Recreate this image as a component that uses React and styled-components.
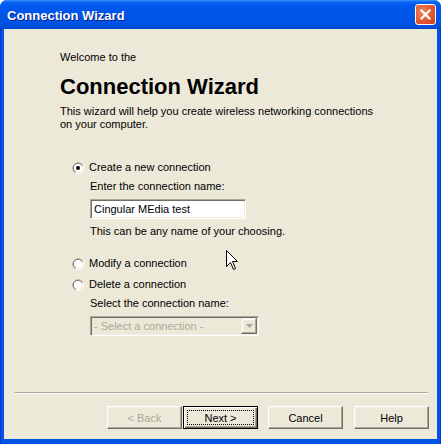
import React from "react";
import styled, { createGlobalStyle } from "styled-components";

const Global = createGlobalStyle`
  html, body { margin: 0; padding: 0; background: #ffffff; }
  body { font-family: "Liberation Sans", Arial, sans-serif; font-size: 11px; color: #000; }
  * { box-sizing: border-box; }
`;

const Window = styled.div`
  position: relative;
  width: 441px;
  height: 444px;
  display: flex;
  flex-direction: column;
  background: #0054e3;
  border-radius: 7px 7px 0 0;
  overflow: hidden;
`;

const TitleBar = styled.div`
  height: 29px;
  flex: none;
  display: flex;
  align-items: center;
  justify-content: space-between;
  padding: 0 5px 0 7px;
  background: linear-gradient(
    to bottom,
    #3d95ff 0px,
    #0a66f0 2px,
    #0058ee 5px,
    #0055e9 14px,
    #0054e3 22px,
    #004fdc 26px,
    #0046d0 29px
  );
`;

const Title = styled.span`
  color: #fff;
  font-family: "Liberation Sans", Arial, sans-serif;
  font-weight: bold;
  font-size: 13px;
  text-shadow: 1px 1px 0 #0a1e8c;
  margin-top: 1px;
`;

const CloseButton = styled.div`
  width: 21px;
  height: 21px;
  border: 1px solid #fff;
  border-radius: 3px;
  background: radial-gradient(circle at 35% 35%, #f0855f 0%, #e3582f 55%, #c8401f 100%);
  display: flex;
  align-items: center;
  justify-content: center;
`;

const Frame = styled.div`
  flex: 1;
  display: flex;
  padding: 0 3px 5px 3px;
  background: #0054e3;
  border-left: 1px solid #0831d9;
  border-right: 1px solid #0831d9;
`;

const Client = styled.div`
  flex: 1;
  background: #ece9d8;
  display: flex;
  flex-direction: column;
`;

const Body = styled.div`
  flex: 1;
  padding: 22px 0 0 56px;
  display: flex;
  flex-direction: column;
`;

const Small = styled.div`
  line-height: 13px;
  margin-top: ${(p) => p.$mt || 0}px;
  color: ${(p) => (p.$disabled ? "#aca899" : "#000")};
`;

const Heading = styled.h1`
  margin: 10px 0 0 0;
  font-size: 22px;
  line-height: 26px;
  font-weight: bold;
  font-family: "Liberation Sans", Arial, sans-serif;
  color: #000;
`;

const Options = styled.div`
  margin-top: 30px;
  display: flex;
  flex-direction: column;
  padding-left: 12px;
`;

const RadioRow = styled.label`
  display: flex;
  align-items: center;
  gap: 5px;
  height: 13px;
  line-height: 13px;
  margin-top: ${(p) => p.$mt || 0}px;
`;

const Sub = styled.div`
  padding-left: 18px;
  display: flex;
  flex-direction: column;
`;

const TextBox = styled.div`
  margin-top: 6px;
  width: 156px;
  height: 20px;
  background: #fff;
  border-style: solid;
  border-width: 1px;
  border-color: #aca899 #fff #fff #aca899;
  box-shadow: inset 1px 1px 0 #716f64, inset -1px -1px 0 #f1efe2;
  padding: 0 3px;
  line-height: 18px;
`;

const Combo = styled.div`
  margin-top: 6px;
  width: 169px;
  height: 20px;
  background: #ece9d8;
  border-style: solid;
  border-width: 1px;
  border-color: #aca899 #fff #fff #aca899;
  box-shadow: inset 1px 1px 0 #716f64, inset -1px -1px 0 #f1efe2;
  display: flex;
  align-items: center;
  padding: 1px 1px 1px 3px;
  color: #aca899;
`;

const ComboText = styled.span`
  flex: 1;
  line-height: 16px;
`;

const ComboButton = styled.div`
  width: 16px;
  height: 16px;
  background: #ece9d8;
  border-style: solid;
  border-width: 1px;
  border-color: #f1efe2 #716f64 #716f64 #f1efe2;
  box-shadow: inset -1px -1px 0 #aca899, inset 1px 1px 0 #fff;
  display: flex;
  align-items: center;
  justify-content: center;
`;

const Footer = styled.div`
  padding: 0 8px 10px 11px;
  display: flex;
  flex-direction: column;
`;

const Separator = styled.div`
  height: 2px;
  margin-right: 1px;
  border-top: 1px solid #aca899;
  border-bottom: 1px solid #fff;
`;

const ButtonRow = styled.div`
  margin-top: 12px;
  display: flex;
  justify-content: flex-end;
`;

const Button = styled.div`
  width: 75px;
  height: 23px;
  margin-left: ${(p) => p.$ml || 0}px;
  background: #ece9d8;
  display: flex;
  align-items: center;
  justify-content: center;
  color: ${(p) => (p.$disabled ? "#aca899" : "#000")};
  position: relative;
  border-style: solid;
  border-width: 1px;
  border-color: ${(p) => (p.$default ? "#000" : "#fff #716f64 #716f64 #fff")};
  box-shadow: ${(p) =>
    p.$default
      ? "inset 1px 1px 0 #fff, inset -1px -1px 0 #716f64, inset -2px -2px 0 #aca899"
      : "inset -1px -1px 0 #aca899, inset 1px 1px 0 #f1efe2"};
`;

const Focus = styled.span`
  position: absolute;
  inset: 3px;
  border: 1px dotted #000;
`;

const Cursor = styled.svg`
  position: absolute;
  left: 226px;
  top: 250px;
  pointer-events: none;
`;

function Radio({ checked }) {
  return (
    <svg width="12" height="12" viewBox="0 0 12 12">
      <path d="M11 3.5 A5.5 5.5 0 1 0 3.5 11" fill="none" stroke="#aca899" strokeWidth="1" />
      <path d="M10 4 A4.5 4.5 0 1 0 4 10" fill="none" stroke="#716f64" strokeWidth="1" />
      <path d="M3.5 11 A5.5 5.5 0 0 0 11 3.5" fill="none" stroke="#fff" strokeWidth="1" />
      <circle cx="6" cy="6" r="4" fill="#fff" />
      {checked && <circle cx="6" cy="6" r="2" fill="#000" />}
    </svg>
  );
}

export default function App() {
  return (
    <>
      <Global />
      <Window>
        <TitleBar>
          <Title>Connection Wizard</Title>
          <CloseButton>
            <svg width="13" height="13" viewBox="0 0 13 13">
              <path d="M2.5 2.5 L10.5 10.5 M10.5 2.5 L2.5 10.5" stroke="#fff" strokeWidth="2.2" strokeLinecap="square" />
            </svg>
          </CloseButton>
        </TitleBar>
        <Frame>
          <Client>
            <Body>
              <Small>Welcome to the</Small>
              <Heading>Connection Wizard</Heading>
              <Small $mt={5}>
                This wizard will help you create wireless networking connections
                <br />
                on your computer.
              </Small>
              <Options>
                <RadioRow>
                  <Radio checked />
                  <span>Create a new connection</span>
                </RadioRow>
                <Sub>
                  <Small $mt={6}>Enter the connection name:</Small>
                  <TextBox>Cingular MEdia test</TextBox>
                  <Small $mt={6}>This can be any name of your choosing.</Small>
                </Sub>
                <RadioRow $mt={19}>
                  <Radio />
                  <span>Modify a connection</span>
                </RadioRow>
                <RadioRow $mt={8}>
                  <Radio />
                  <span>Delete a connection</span>
                </RadioRow>
                <Sub>
                  <Small $mt={6}>Select the connection name:</Small>
                  <Combo>
                    <ComboText>- Select a connection -</ComboText>
                    <ComboButton>
                      <svg width="7" height="4" viewBox="0 0 7 4">
                        <path d="M0 0 H7 L3.5 4 Z" fill="#aca899" />
                      </svg>
                    </ComboButton>
                  </Combo>
                </Sub>
              </Options>
            </Body>
            <Footer>
              <Separator />
              <ButtonRow>
                <Button $disabled>&lt; Back</Button>
                <Button $default $ml={1}>
                  <Focus />
                  Next &gt;
                </Button>
                <Button $ml={10}>Cancel</Button>
                <Button $ml={11}>Help</Button>
              </ButtonRow>
            </Footer>
          </Client>
        </Frame>
        <Cursor width="13" height="21" viewBox="0 0 13 21">
          <path
            d="M0.5 0.5 L0.5 16.5 L4.5 12.5 L7.5 19.5 L9.5 18.5 L6.5 11.5 L11.5 11.5 Z"
            fill="#fff"
            stroke="#000"
            strokeWidth="1"
            strokeLinejoin="miter"
          />
        </Cursor>
      </Window>
    </>
  );
}
